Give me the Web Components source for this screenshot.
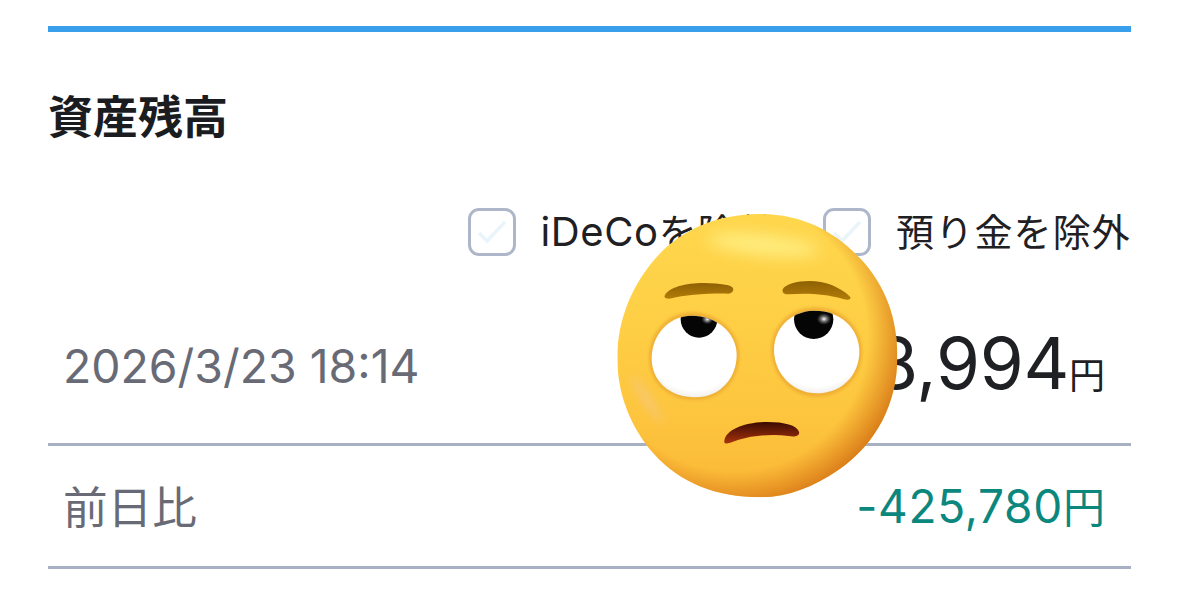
<!DOCTYPE html>
<html lang="ja"><head><meta charset="utf-8">
<style>
html,body{margin:0;background:#fff;height:592px;overflow:hidden}
body{font-family:Inter,"Noto Sans CJK JP",sans-serif;color:#1f2023}
.latin{font-size:40px;letter-spacing:.6px}
.v{letter-spacing:-.3px}
.n{letter-spacing:.7px}
.yen{font-size:42px}
</style></head><body>
<asset-card>
  <span slot="title">資産残高</span>
  <check-box slot="filters"><span class="latin">iDeCo</span>を除外</check-box>
  <check-box slot="filters">預り金を除外</check-box>
  <summary-row slot="rows" class="a" label="2026/3/23 18:14"><span class="v">8,994</span><span class="u">円</span></summary-row>
  <summary-row slot="rows" label="前日比" tone="down"><span class="n">-425,780</span><span class="yen">円</span></summary-row>
</asset-card>
<emoji-face></emoji-face>
<script>
const el=(name,html,extra)=>{customElements.define(name,class extends HTMLElement{
  constructor(){super();this.attachShadow({mode:'open'}).innerHTML=html;}
  connectedCallback(){if(extra)extra(this);}
});};
el('asset-card',`<style>
:host{display:block;padding:26px 47px 0 48px}
.bar{height:6px;background:#3a9fea}
h2{margin:53px 0 0;font:700 45px/60px "Noto Sans CJK JP",sans-serif;color:#1b1c1f}
.f{display:flex;justify-content:flex-end;gap:47px;margin-top:63px}
.r{margin-top:55px;display:block}
</style><div class="bar"></div><h2><slot name="title"></slot></h2>
<div class="f"><slot name="filters"></slot></div><div class="r"><slot name="rows"></slot></div>`);
el('check-box',`<style>
:host{display:inline-flex;align-items:center;gap:25px;font-size:38px;line-height:48px;letter-spacing:1.15px;white-space:nowrap;font-family:Inter,"Noto Sans CJK JP",sans-serif;color:#1f2023}
.b{box-sizing:border-box;width:48px;height:48px;border:3px solid #aeb7ca;border-radius:11px;background:#fff;display:flex;align-items:center;justify-content:center}
svg{width:32px;height:32px}
</style><span class="b"><svg viewBox="0 0 32 32" fill="none"><path d="M3 17l8 8L29 6" stroke="#e9f4fb" stroke-width="3.4"/></svg></span><span><slot></slot></span>`);
el('summary-row',`<style>
:host{display:flex;justify-content:space-between;align-items:center;box-sizing:border-box;padding:0 26px 4px 15px;border-bottom:3px solid #a8b1c4;font-family:Inter,"Noto Sans CJK JP",sans-serif}
.l{color:#686b76;font-size:44.6px}
:host(.a) .l{font-size:46.4px}
:host(.a){height:135px;padding-bottom:22px}
:host(.a) .d{margin-bottom:6px}
:host(:not(.a)){height:123px}
:host([tone=down]) .d{color:#0b877e;font-size:46px}
.d{color:#1f2023;font-size:71px;white-space:nowrap}
::slotted(.u){font-size:36px}
</style><span class="l"></span><span class="d"><slot></slot></span>`,h=>{h.shadowRoot.querySelector('.l').textContent=h.getAttribute('label');});
el('emoji-face',`<style>
:host{display:block;position:absolute;left:600px;top:200px;width:320px;height:310px}
svg{display:block;width:100%;height:100%}
</style><svg viewBox="0 0 960 930">
<defs>
<linearGradient id="f" x1="0" y1="0" x2="0" y2="1"><stop offset="0" stop-color="#ffd84e"/><stop offset=".35" stop-color="#fed046"/><stop offset=".7" stop-color="#fdc53e"/><stop offset="1" stop-color="#fab535"/></linearGradient>
<radialGradient id="edge" gradientUnits="userSpaceOnUse" cx="400" cy="410" r="530">
<stop offset=".76" stop-color="#d87414" stop-opacity="0"/><stop offset="1" stop-color="#cf6a10" stop-opacity=".9"/></radialGradient>
<linearGradient id="brow" x1="0" y1="0" x2="0" y2="1"><stop offset="0" stop-color="#8f6104"/><stop offset="1" stop-color="#b17c08"/></linearGradient>
<linearGradient id="mouth" x1="0" y1="0" x2="0" y2="1"><stop offset="0" stop-color="#3c0a02"/><stop offset="1" stop-color="#a8340c"/></linearGradient>
<radialGradient id="eye" cx=".5" cy=".35" r=".75"><stop offset=".75" stop-color="#fff"/><stop offset="1" stop-color="#e2dfd8"/></radialGradient>
<radialGradient id="shine" cx=".5" cy=".5" r=".5"><stop offset="0" stop-color="#fff"/><stop offset="1" stop-color="#777" stop-opacity="0"/></radialGradient>
<clipPath id="c1"><path d="M155 475C155 405 205 350 270 347C345 345 410 395 410 465C410 530 365 592 285 592C210 592 155 545 155 475Z"/></clipPath>
<clipPath id="c2"><path d="M522 450C522 385 570 335 640 332C720 330 778 385 778 455C778 525 725 580 650 580C578 580 522 520 522 450Z"/></clipPath>
<clipPath id="face"><path d="M472 42C600 40 700 90 780 175C860 260 892 360 892 470C892 610 830 730 715 810C640 862 560 892 480 892C350 892 240 850 160 760C90 680 52 580 52 475C52 355 100 240 190 150C270 75 370 44 472 42Z"/></clipPath>
<filter id="bl" x="-20%" y="-20%" width="140%" height="140%"><feGaussianBlur stdDeviation="5"/></filter>
<filter id="bl2" x="-40%" y="-80%" width="180%" height="260%"><feGaussianBlur stdDeviation="24"/></filter>
<filter id="bl3" x="-80%" y="-40%" width="260%" height="180%"><feGaussianBlur stdDeviation="14"/></filter>
</defs>
<g clip-path="url(#face)">
<rect width="960" height="930" fill="url(#f)"/>
<rect width="960" height="930" fill="url(#edge)"/>
<ellipse cx="490" cy="135" rx="170" ry="30" fill="#fff490" opacity=".8" filter="url(#bl2)" transform="rotate(6 490 135)"/>
<path d="M90 520C110 590 150 640 195 680C170 620 140 560 90 520Z" fill="#f6c98a" opacity=".7" filter="url(#bl3)"/>
</g>
<path d="M195 285C215 252 300 240 385 256C408 262 402 280 385 281C320 280 250 285 215 295C198 298 190 293 195 285Z" fill="url(#brow)"/>
<path d="M548 268C560 245 640 232 695 255C722 267 745 282 752 293C750 302 735 300 722 295C680 282 620 278 565 283C550 284 546 276 548 268Z" fill="url(#brow)"/>
<path d="M147 475C147 400 200 340 270 337C350 335 418 392 418 465C418 535 370 600 285 600C205 600 147 550 147 475Z" fill="#e9a42f" opacity=".7" filter="url(#bl)"/>
<path d="M514 450C514 380 565 325 640 322C725 320 786 380 786 455C786 530 730 590 650 590C572 590 514 525 514 450Z" fill="#e9a42f" opacity=".7" filter="url(#bl)"/>
<path d="M155 475C155 405 205 350 270 347C345 345 410 395 410 465C410 530 365 592 285 592C210 592 155 545 155 475Z" fill="url(#eye)"/>
<path d="M522 450C522 385 570 335 640 332C720 330 778 385 778 455C778 525 725 580 650 580C578 580 522 520 522 450Z" fill="url(#eye)"/>
<g clip-path="url(#c1)"><circle cx="297" cy="358" r="55" fill="#050505"/><ellipse cx="322" cy="358" rx="18" ry="15" fill="url(#shine)"/></g>
<g clip-path="url(#c2)"><circle cx="641" cy="358" r="59" fill="#050505"/><ellipse cx="672" cy="357" rx="22" ry="18" fill="url(#shine)"/></g>
<path d="M373 722C378 690 430 668 495 666C550 665 590 675 597 695C600 708 585 712 565 708C510 700 440 708 395 727C380 733 371 731 373 722Z" fill="url(#mouth)"/>
</svg>`);
</script>
</body></html>
